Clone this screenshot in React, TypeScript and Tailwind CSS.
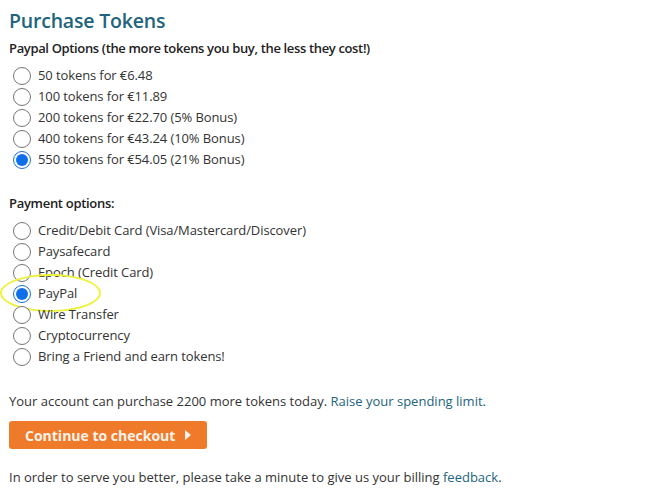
import React, { useState } from 'react';

const tokenOptions = [
  '50 tokens for €6.48',
  '100 tokens for €11.89',
  '200 tokens for €22.70 (5% Bonus)',
  '400 tokens for €43.24 (10% Bonus)',
  '550 tokens for €54.05 (21% Bonus)',
];

const paymentOptions = [
  'Credit/Debit Card (Visa/Mastercard/Discover)',
  'Paysafecard',
  'Epoch (Credit Card)',
  'PayPal',
  'Wire Transfer',
  'Cryptocurrency',
  'Bring a Friend and earn tokens!',
];

const Radio: React.FC<{ checked: boolean }> = ({ checked }) => (
  <span
    className={`flex h-[18px] w-[18px] shrink-0 items-center justify-center rounded-full border bg-white ${
      checked ? 'border-[#1a6fd6]' : 'border-[#767676]'
    }`}
  >
    {checked && <span className="h-[12px] w-[12px] rounded-full bg-[#0f6fe8]" />}
  </span>
);

const RadioRow: React.FC<{ label: string; checked: boolean; onSelect: () => void }> = ({ label, checked, onSelect }) => (
  <label className="flex h-[21px] cursor-pointer items-center gap-[7px] pl-[4px]" onClick={onSelect}>
    <Radio checked={checked} />
    <span className="tracking-[-0.1px]">{label}</span>
  </label>
);

const App: React.FC = () => {
  const [tokens, setTokens] = useState(4);
  const [payment, setPayment] = useState(3);

  return (
    <div
      className="min-h-screen bg-white pl-[9px] pt-[7px] text-[13px] text-[#333]"
      style={{ fontFamily: '"Open Sans", "Noto Sans", sans-serif' }}
    >
      <h1 className="text-[19.5px] font-semibold leading-[28px] tracking-[-0.2px] text-[#22647c]">Purchase Tokens</h1>
      <p className="mt-[3px] font-semibold leading-[20px] tracking-[-0.35px] text-[#222]">
        Paypal Options (the more tokens you buy, the less they cost!)
      </p>

      <div className="mt-[7px] flex flex-col">
        {tokenOptions.map((opt, i) => (
          <RadioRow key={opt} label={opt} checked={tokens === i} onSelect={() => setTokens(i)} />
        ))}
      </div>

      <p className="mt-[23px] font-semibold leading-[20px] tracking-[-0.3px] text-[#222]">Payment options:</p>

      <div className="mt-[7px] flex flex-col">
        {paymentOptions.map((opt, i) => (
          <div key={opt} className="relative">
            {opt === 'PayPal' && (
              <span className="pointer-events-none absolute left-[-9px] top-[-9px] h-[38px] w-[101px] rounded-[50%] border-[2.5px] border-[#eef23c]" />
            )}
            <RadioRow label={opt} checked={payment === i} onSelect={() => setPayment(i)} />
          </div>
        ))}
      </div>

      <p className="mt-[24px] leading-[20px]">
        Your account can purchase 2200 more tokens today.{' '}
        <a href="#" className="text-[#22647c]">Raise your spending limit.</a>
      </p>

      <button className="mt-[10px] flex h-[28px] items-center gap-[10px] rounded-[3px] bg-[#ef7a2a] pl-[16px] pr-[16px] text-[14px] font-bold text-[#fdf3ea]">
        Continue to checkout
        <svg width="6" height="10" viewBox="0 0 6 10"><path d="M0 0 L6 5 L0 10 Z" fill="#fdf3ea" /></svg>
      </button>

      <p className="mt-[18px] leading-[20px]">
        In order to serve you better, please take a minute to give us your billing{' '}
        <a href="#" className="text-[#22647c]">feedback</a>.
      </p>
    </div>
  );
};

export default App;
